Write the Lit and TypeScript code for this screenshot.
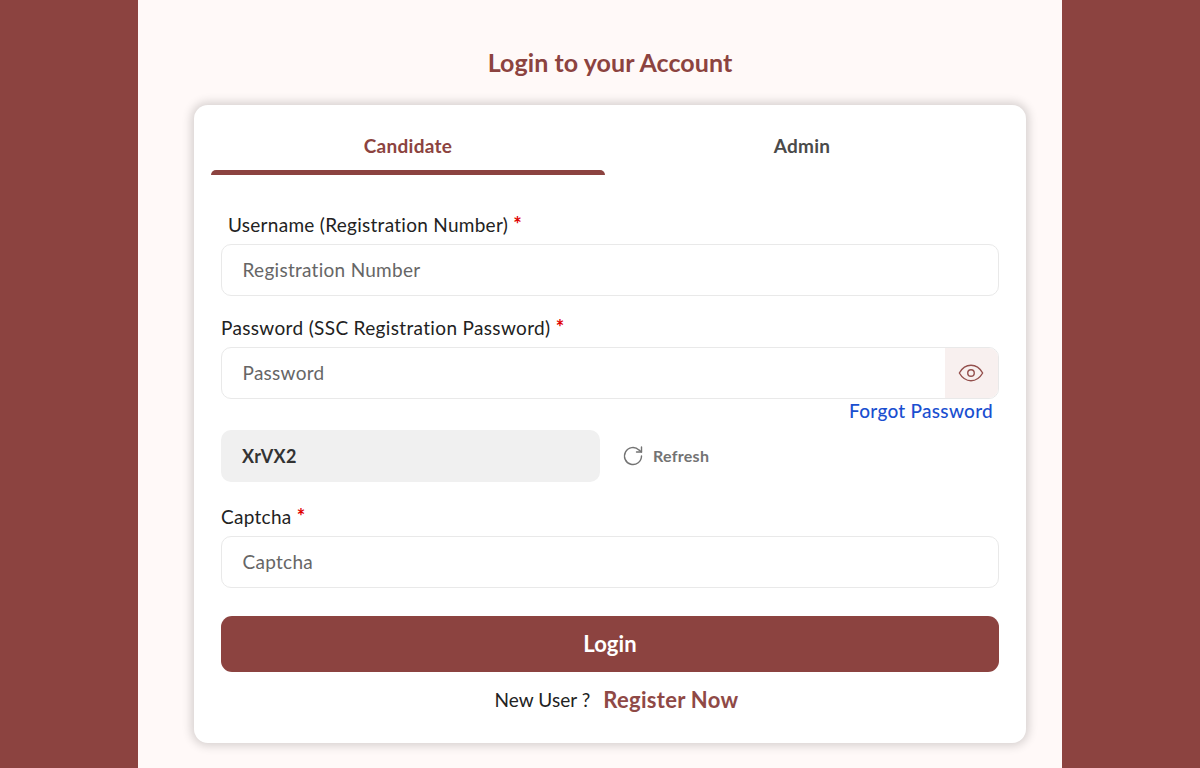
import { LitElement, html, css } from "lit";
import { customElement } from "lit/decorators.js";

@customElement("app-root")
export class AppRoot extends LitElement {
  static styles = css`
    :host { display: block; height: 768px; overflow: hidden; background: #8c4340; font-family: "Lato", "Noto Sans", sans-serif; letter-spacing: .28px; }
    .panel { width: 924px; height: 768px; margin: 0 auto; background: #fff9f8; padding: 43px 0 0 20px; box-sizing: border-box; display: flex; flex-direction: column; align-items: center; }
    h1 { margin: 0 0 24px; font-size: 25px; line-height: 38px; font-weight: 700; color: #8c4340; letter-spacing: .08px; }
    .card { width: 832px; height: 638px; box-sizing: border-box; background: #fff; border-radius: 14px; box-shadow: 0 0 10px 3px rgba(0,0,0,.16); padding: 0 27px; }
    .tabs { display: flex; margin-left: -10px; height: 70px; }
    .tab { flex: 1; display: flex; flex-direction: column; font-size: 19px; font-weight: 700; color: #4a4a4a; }
    .tab span { flex: 1; display: flex; align-items: center; justify-content: center; padding-top: 16px; }
    .tab i { display: block; height: 5px; border-radius: 6px 6px 0 0; }
    .tab.active { color: #8c4340; }
    .tab.active i { background: #8c4340; }
    .form { padding-top: 36px; }
    label { display: block; font-size: 19px; line-height: 27px; padding-bottom: 1px; color: #222; margin-bottom: 5px; }
    label.wide { letter-spacing: .34px; }
    label.indent { padding-left: 7px; }
    label b { color: #e00000; font-weight: 700; font-size: 20px; line-height: 20px; }
    .field { display: flex; height: 52px; box-sizing: border-box; border: 1.5px solid #e9e9e9; border-radius: 10px; overflow: hidden; background: #fff; margin-bottom: 18px; }
    .field .ph { flex: 1; display: flex; align-items: center; padding: 0 0 1px 20.5px; font-size: 19px; color: #666; }
    .field .eye { width: 53px; display: flex; align-items: center; justify-content: center; padding-right: 2px; box-sizing: border-box; background: #f8f0ef; }
    .forgot { text-align: right; margin: -18px 6px 7px 0; font-size: 19px; line-height: 24px; color: #1a4fd0; font-weight: 500; }
    .captcha { display: flex; align-items: center; gap: 22px; margin-bottom: 21px; }
    .code { width: 379px; height: 52px; box-sizing: border-box; background: #f0f0f0; border-radius: 10px; display: flex; align-items: center; padding-left: 21px; font-size: 18px; font-weight: 700; color: #333; }
    .refresh { display: flex; align-items: center; gap: 9px; font-size: 16px; font-weight: 700; color: #737373; }
    .refresh span { padding-bottom: 2px; }
    button { display: block; width: 100%; height: 56px; border: 0; padding: 0 0 2px; margin-top: 28px; border-radius: 11px; background: #8c4340; color: #fff; font: 700 22px "Lato", sans-serif; letter-spacing: .1px; }
    .foot { display: flex; justify-content: center; align-items: center; gap: 13px; margin-top: 13px; padding-left: 13px; font-size: 19px; line-height: 30px; color: #222; letter-spacing: .05px; }
    .foot a { color: #8f4946; font-size: 22px; font-weight: 700; letter-spacing: .28px; }
    .field.last { margin-bottom: 0; }
  `;
  render() {
    return html`<div class="panel">
      <h1>Login to your Account</h1>
      <div class="card">
        <div class="tabs">
          <div class="tab active"><span>Candidate</span><i></i></div>
          <div class="tab"><span>Admin</span><i></i></div>
        </div>
        <div class="form">
          <label class="indent">Username (Registration Number) <b>*</b></label>
          <div class="field"><div class="ph">Registration Number</div></div>
          <label class="wide">Password (SSC Registration Password) <b>*</b></label>
          <div class="field"><div class="ph">Password</div><div class="eye">
            <svg width="28" height="28" viewBox="0 0 24 24" fill="none" stroke="#94504d" stroke-width="1.2" stroke-linecap="round" stroke-linejoin="round"><path d="M2 12c2.4-4.2 5.8-6.6 10-6.600S19.600 7.800 22 12c-2.400 4.200-5.800 6.600-10 6.600S4.400 16.200 2 12z"/><circle cx="12" cy="12" r="2.800"/></svg>
          </div></div>
          <div class="forgot">Forgot Password</div>
          <div class="captcha"><div class="code">XrVX2</div>
            <div class="refresh"><svg width="22" height="22" viewBox="0 0 22 22" fill="none" stroke="#737373" stroke-width="1.4" stroke-linecap="round" stroke-linejoin="round"><path d="M19.500 11a8.500 8.500 0 1 1-2.600-6.100L19.500 7"/><path d="M19.500 2v5h-5"/></svg><span>Refresh</span></div>
          </div>
          <label>Captcha <b>*</b></label>
          <div class="field last"><div class="ph">Captcha</div></div>
          <button>Login</button>
          <div class="foot"><span>New User ?</span><a>Register Now</a></div>
        </div>
      </div>
    </div>`;
  }
}
